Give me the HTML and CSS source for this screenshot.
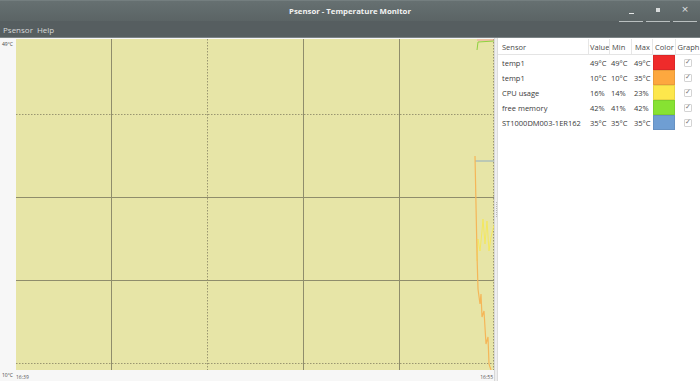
FILE: index.html
```html
<!DOCTYPE html>
<html>
<head>
<meta charset="utf-8">
<link rel="stylesheet" href="styles.css">
</head>
<body>
<div class="window">
  <header class="titlebar">
    <div class="title">Psensor - Temperature Monitor</div>
    <div class="wbtns">
      <div class="wbtn"><span class="ico-min"></span></div>
      <div class="wbtn"><span class="ico-max"></span></div>
      <div class="wbtn"><span class="ico-close">×</span></div>
    </div>
  </header>
  <nav class="menubar">
    <span class="menu">Psensor</span>
    <span class="menu">Help</span>
  </nav>
  <main class="content">
    <section class="graph">
      <div class="ylab ytop">49°C</div>
      <div class="plot">
        <svg viewBox="0 0 478 331" width="478" height="331" class="plotsvg">
          <g stroke="#8f8d6c" stroke-width="1" fill="none">
            <line x1="95.5" y1="0" x2="95.5" y2="331"/>
            <line x1="287.5" y1="0" x2="287.5" y2="331"/>
            <line x1="383.5" y1="0" x2="383.5" y2="331"/>
            <line x1="0" y1="158.5" x2="478" y2="158.5"/>
            <line x1="0" y1="241.5" x2="478" y2="241.5"/>
          </g>
          <g stroke="#9a9670" stroke-width="1" fill="none" stroke-dasharray="1.5 1.5">
            <line x1="191.5" y1="0" x2="191.5" y2="331"/>
            <line x1="0" y1="75.5" x2="478" y2="75.5"/>
            <line x1="0" y1="324.5" x2="478" y2="324.5"/>
            <line x1="477.5" y1="0" x2="477.5" y2="331"/>
          </g>
          <polyline fill="none" stroke="#f2a0a0" stroke-width="1" points="461,1 478,1"/>
          <polyline fill="none" stroke="#8fd040" stroke-width="1" points="461,11 462,3 478,2"/>
          <polyline fill="none" stroke="#9fb4bf" stroke-width="1.2" points="459,122 478,122"/>
          <polyline fill="none" stroke="#f4e860" stroke-width="1" points="461,222 462,200 464,212 466,192 467,180 469,205 471,182 473,212 475,198 478,186"/>
          <polyline fill="none" stroke="#f5b658" stroke-width="1.2" points="459,117 461,215 462,250 464,265 465,255 466,278 468,272 470,305 472,298 473,325 475,331"/>
        </svg>
      </div>
      <div class="ylab ybot">10°C</div>
      <div class="xlabs"><span>16:39</span><span>16:55</span></div>
    </section>
    <div class="handle"><span class="grip"></span></div>
    <section class="sensors">
      <div class="row head">
        <span class="c-name">Sensor</span>
        <span class="c-val">Value</span>
        <span class="c-min">Min</span>
        <span class="c-max">Max</span>
        <span class="c-col">Color</span>
        <span class="c-gr">Graph</span>
      </div>
      <div class="row">
        <span class="c-name">temp1</span><span class="c-val">49°C</span><span class="c-min">49°C</span><span class="c-max">49°C</span>
        <span class="c-col"><i class="sw red"></i></span><span class="c-gr"><i class="chk">✓</i></span>
      </div>
      <div class="row">
        <span class="c-name">temp1</span><span class="c-val">10°C</span><span class="c-min">10°C</span><span class="c-max">35°C</span>
        <span class="c-col"><i class="sw orange"></i></span><span class="c-gr"><i class="chk">✓</i></span>
      </div>
      <div class="row">
        <span class="c-name">CPU usage</span><span class="c-val">16%</span><span class="c-min">14%</span><span class="c-max">23%</span>
        <span class="c-col"><i class="sw yellow"></i></span><span class="c-gr"><i class="chk">✓</i></span>
      </div>
      <div class="row">
        <span class="c-name">free memory</span><span class="c-val">42%</span><span class="c-min">41%</span><span class="c-max">42%</span>
        <span class="c-col"><i class="sw green"></i></span><span class="c-gr"><i class="chk">✓</i></span>
      </div>
      <div class="row">
        <span class="c-name">ST1000DM003-1ER162</span><span class="c-val">35°C</span><span class="c-min">35°C</span><span class="c-max">35°C</span>
        <span class="c-col"><i class="sw blue"></i></span><span class="c-gr"><i class="chk">✓</i></span>
      </div>
    </section>
  </main>
</div>
</body>
</html>
```

FILE: styles.css
```css
* { box-sizing: border-box; }
html, body { margin: 0; padding: 0; }
body {
  width: 700px;
  height: 381px;
  overflow: hidden;
  font-family: "Open Sans", "DejaVu Sans", sans-serif;
  background: #f6f6f6;
}
.window { display: flex; flex-direction: column; height: 381px; }

.titlebar {
  height: 21px;
  background: linear-gradient(#667071, #5b6465);
  border-top: 1px solid #747e7f;
  position: relative;
  display: flex;
  align-items: center;
  justify-content: center;
}
.title {
  color: #f2f2f2;
  font-weight: bold;
  font-size: 7.8px;
}
.wbtns {
  position: absolute;
  right: 3px;
  top: 0;
  height: 21px;
  display: flex;
  gap: 3px;
}
.wbtn {
  width: 24px;
  height: 21px;
  border-bottom: 1px solid #b9bfc0;
  display: flex;
  align-items: center;
  justify-content: center;
}
.ico-min { width: 5px; height: 1px; background: #e4e6e6; margin-top: 4px; }
.ico-max { width: 4px; height: 4px; background: #d8dbdb; margin-top: -2px; }
.ico-close { color: #e0e3e3; font-size: 9px; line-height: 1; margin-top: -3px; font-family: "DejaVu Sans", sans-serif; }

.menubar {
  height: 17px;
  background: #565e60;
  display: flex;
  align-items: center;
  gap: 4px;
  padding-left: 3px;
  border-bottom: 1px solid #7c8486;
}
.menu { color: #d6d9d9; font-size: 8px; }

.content { flex: 1; display: flex; min-height: 0; }

.graph {
  width: 494px;
  display: grid;
  grid-template-columns: 16px 478px;
  grid-template-rows: 331px 11px;
  padding-top: 1px;
  background: #f7f7f7;
  position: relative;
}
.ylab {
  font-size: 5px;
  color: #444;
  padding-left: 2px;
}
.ytop { grid-column: 1; grid-row: 1; padding-top: 2px; }
.ybot { position: absolute; left: 0; bottom: 3px; }
.plot { grid-column: 2; grid-row: 1; background: #e7e5a7; }
.plotsvg { display: block; }
.xlabs {
  grid-column: 2;
  grid-row: 2;
  display: flex;
  justify-content: space-between;
  font-size: 5px;
  color: #555;
  padding-top: 4px;
  padding-right: 1px;
}

.handle {
  width: 4px;
  background: #eeeeee;
  border-left: 1px solid #d8d8d8;
  border-right: 1px solid #dcdcdc;
  display: flex;
  justify-content: center;
  padding-top: 164px;
}
.grip {
  width: 1px;
  height: 16px;
  background: repeating-linear-gradient(#b8b8b8 0 1px, transparent 1px 2px);
}

.sensors {
  flex: 1;
  background: #ffffff;
  padding-top: 1px;
}
.row {
  display: flex;
  height: 15px;
  align-items: center;
  font-size: 7.5px;
  color: #3a3a3a;
}
.row.head {
  height: 16px;
  color: #4a4a4a;
  border-bottom: 1px solid #e4e4e4;
}
.row span { height: 100%; display: flex; align-items: center; white-space: nowrap; }
.c-name { width: 90px; padding-left: 4px; }
.c-val { width: 21px; padding-left: 2px; }
.c-min { width: 22px; padding-left: 2px; }
.c-max { width: 21px; padding-left: 3px; }
.c-col { width: 23px; padding-left: 1px; }
.c-gr { width: 25px; padding-left: 1px; justify-content: center; }
.head span + span { border-left: 1px solid #e6e6e6; }
.head .c-val { padding-left: 1px; }
.head .c-col { padding-left: 2px; }

.sw { display: block; width: 22px; height: 15px; border: 1px solid rgba(0,0,0,0.08); }
.red { background: #ef2b2b; }
.orange { background: #fda83f; }
.yellow { background: #fde74c; }
.green { background: #87e232; }
.blue { background: #6f9ed3; }
.chk {
  font-style: normal;
  font-size: 7px;
  color: #777;
  width: 8px;
  height: 8px;
  border: 1px solid #d4d4d4;
  border-radius: 1px;
  display: flex;
  align-items: center;
  justify-content: center;
  line-height: 1;
  font-family: "DejaVu Sans", sans-serif;
}
```
